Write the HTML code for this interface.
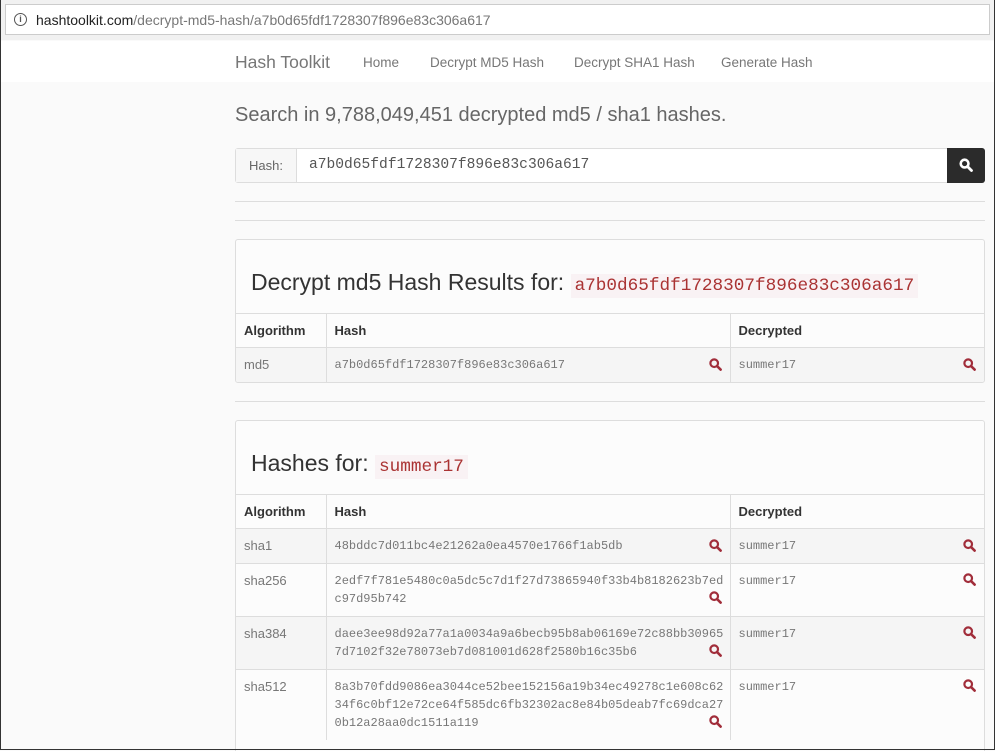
<!DOCTYPE html><html><head><style>
html,body{margin:0;width:995px;height:751px;overflow:hidden}
body{font-family:"Liberation Sans",sans-serif;background:#fafafa;position:relative}
.frame{position:absolute;left:0;top:0;width:993px;height:749px;border:1px solid #333;border-top:none;pointer-events:none}
.addr{position:absolute;left:0;top:0;width:995px;height:40px;background:#f1f1f1}
.addr .box{position:absolute;left:5px;top:4px;width:985px;height:31px;background:#fff;border:1px solid #ccc;box-sizing:border-box}
.addr .t{position:absolute;left:36px;top:12px;font-size:14px;color:#777}
.addr .t b{font-weight:normal;color:#222}
.addr .i{position:absolute;left:14px;top:13px;width:11px;height:11px;border:1.5px solid #555;border-radius:50%;font-size:9px;line-height:11px;text-align:center;color:#555;font-weight:bold}
.nav{position:absolute;left:1px;top:41px;width:993px;height:41px;background:#fff}
.nav span{position:absolute;top:14px;font-size:13.5px;color:#777}
.a{position:absolute}
.h1{left:235px;top:104px;font-size:20px;color:#666}
.search{left:235px;top:148px;width:750px;height:35px;border:1px solid #ddd;border-radius:3px;background:#fff;box-sizing:border-box}
.search .lab{position:absolute;left:0;top:0;width:60px;height:33px;background:#f7f7f7;border-right:1px solid #ddd;font-size:13px;color:#666;line-height:33px;text-align:center}
.search .v{position:absolute;left:73px;top:8px;font:14.6px "Liberation Mono",monospace;color:#555}
.search .btn{position:absolute;right:-1px;top:-1px;width:38px;height:35px;background:#2b2b2b;border-radius:0 3px 3px 0}
.hr{left:235px;width:750px;height:1px;background:#ddd}
.panel{left:235px;width:750px;border:1px solid #ddd;border-radius:3px;background:#fcfcfc;box-sizing:border-box;overflow:hidden}
.ptitle{position:absolute;left:15px;font-size:23px;color:#333;white-space:nowrap}
code{font:17.7px "Liberation Mono",monospace;background:#f9f2f4;padding:2px 4px;color:#a33}
table{position:absolute;left:0;width:748px;border-collapse:collapse;font-size:13px;table-layout:fixed}
td{border-top:1px solid #ddd;vertical-align:top;padding:8px;line-height:18px;position:relative;color:#777}
td+td{border-left:1px solid #ddd}
th{border-top:1px solid #ddd;text-align:left;padding:8px;line-height:17px;font-size:13px;color:#333}
th+th{border-left:1px solid #ddd}
.m{font:12px/18px "Liberation Mono",monospace;color:#777}
tr.g td{background:#f5f5f5}
svg.q{position:absolute;right:8px;width:13px;height:13px}
</style></head><body>
<svg width="0" height="0" style="position:absolute"><defs><symbol id="mg" viewBox="0 0 13 13"><circle cx="5.2" cy="5.2" r="3.8" fill="none" stroke="#a12d3a" stroke-width="2.2"/><path d="M8 8l3.6 3.6" stroke="#a12d3a" stroke-width="2.6" stroke-linecap="round"/></symbol></defs></svg>
<div class="addr"><div class="box"></div><div class="i">i</div><div class="t"><b>hashtoolkit.com</b>/decrypt-md5-hash/a7b0d65fdf1728307f896e83c306a617</div></div>
<div class="nav"><span style="left:234px;font-size:17.5px;top:11px">Hash Toolkit</span><span style="left:362px">Home</span><span style="left:429px">Decrypt MD5 Hash</span><span style="left:573px">Decrypt SHA1 Hash</span><span style="left:720px">Generate Hash</span></div>
<div class="a h1">Search in 9,788,049,451 decrypted md5 / sha1 hashes.</div>
<div class="a search"><div class="lab">Hash:</div><div class="v">a7b0d65fdf1728307f896e83c306a617</div><div class="btn"><svg style="position:absolute;left:12px;top:10px" width="14" height="14" viewBox="0 0 13 13"><circle cx="5.2" cy="5.2" r="3.6" fill="none" stroke="#fff" stroke-width="2.4"/><path d="M8 8l3.6 3.6" stroke="#fff" stroke-width="2.6" stroke-linecap="round"/></svg></div></div>
<div class="a hr" style="top:201px"></div><div class="a hr" style="top:220px"></div>
<div class="a panel" style="top:239px;height:144px">
<div class="ptitle" style="top:29px">Decrypt md5 Hash Results for: <code>a7b0d65fdf1728307f896e83c306a617</code></div>
<table style="top:73px"><colgroup><col style="width:90px"><col style="width:404px"><col></colgroup><tr><th>Algorithm</th><th>Hash</th><th>Decrypted</th></tr>
<tr class="g"><td>md5</td><td class="m">a7b0d65fdf1728307f896e83c306a617<svg class="q" style="top:10px"><use href="#mg"/></svg></td><td class="m">summer17<svg class="q" style="top:10px"><use href="#mg"/></svg></td></tr></table></div>
<div class="a hr" style="top:401px"></div>
<div class="a panel" style="top:420px;height:340px">
<div class="ptitle" style="top:29px">Hashes for: <code>summer17</code></div>
<table style="top:73px"><colgroup><col style="width:90px"><col style="width:404px"><col></colgroup><tr><th>Algorithm</th><th>Hash</th><th>Decrypted</th></tr>
<tr class="g"><td>sha1</td><td class="m">48bddc7d011bc4e21262a0ea4570e1766f1ab5db<svg class="q" style="top:10px"><use href="#mg"/></svg></td><td class="m">summer17<svg class="q" style="top:10px"><use href="#mg"/></svg></td></tr>
<tr><td>sha256</td><td class="m">2edf7f781e5480c0a5dc5c7d1f27d73865940f33b4b8182623b7ed<br>c97d95b742<svg class="q" style="top:27px"><use href="#mg"/></svg></td><td class="m">summer17<svg class="q" style="top:9px"><use href="#mg"/></svg></td></tr>
<tr class="g"><td>sha384</td><td class="m">daee3ee98d92a77a1a0034a9a6becb95b8ab06169e72c88bb30965<br>7d7102f32e78073eb7d081001d628f2580b16c35b6<svg class="q" style="top:27px"><use href="#mg"/></svg></td><td class="m">summer17<svg class="q" style="top:9px"><use href="#mg"/></svg></td></tr>
<tr><td>sha512</td><td class="m">8a3b70fdd9086ea3044ce52bee152156a19b34ec49278c1e608c62<br>34f6c0bf12e72ce64f585dc6fb32302ac8e84b05deab7fc69dca27<br>0b12a28aa0dc1511a119<svg class="q" style="top:45px"><use href="#mg"/></svg></td><td class="m">summer17<svg class="q" style="top:9px"><use href="#mg"/></svg></td></tr>
</table></div>
<div class="frame"></div>
</body></html>
